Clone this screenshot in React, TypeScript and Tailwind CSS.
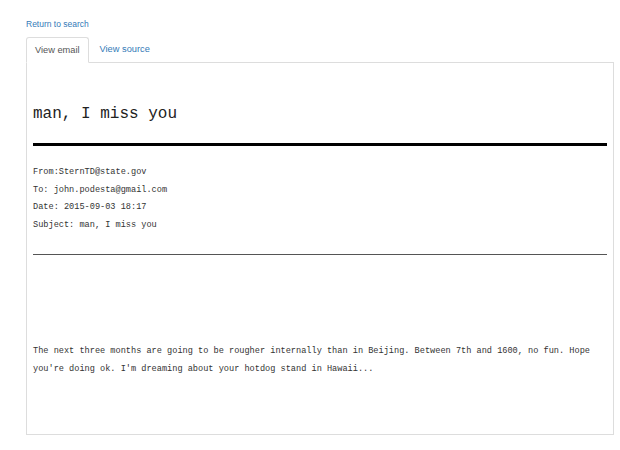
export default function App() {
  const mono = { fontFamily: '"Liberation Mono", "DejaVu Sans Mono", monospace' };
  return (
    <div className="min-h-[450px] bg-white px-[26px] pt-[18px]" style={{ fontFamily: '"Liberation Sans", Arial, sans-serif' }}>
      <a className="block text-[8.5px] leading-[12px] text-[#337ab7]">Return to search</a>

      <div className="mt-[7px] w-[588px]">
        {/* tabs */}
        <div className="flex border-b border-[#ddd]">
          <div className="-mb-px h-[26px] border border-[#ddd] border-b-white bg-white px-[8px] text-[9.25px] leading-[25px] text-[#555] rounded-t-[3px]">
            View email
          </div>
          <div className="h-[25px] px-[11px] text-[9.25px] leading-[25px] text-[#337ab7]">View source</div>
        </div>

        {/* panel */}
        <div className="border border-t-0 border-[#ddd] px-[6px] pt-[41px] pb-[56px] text-[#333]" style={mono}>
          <h1 className="text-[16px] leading-[20px] text-[#222]">man, I miss you</h1>
          <div className="mt-[19px] h-[3px] bg-black" />

          <div className="mt-[18px] text-[8.6px] leading-[17.5px]">
            <div>From:SternTD@state.gov</div>
            <div>To: john.podesta@gmail.com</div>
            <div>Date: 2015-09-03 18:17</div>
            <div>Subject: man, I miss you</div>
          </div>
          <div className="mt-[20px] h-px bg-[#555]" />

          <p className="mt-[88px] text-[8.6px] leading-[17.5px]">
            The next three months are going to be rougher internally than in Beijing. Between 7th and 1600, no fun. Hope
            you're doing ok. I'm dreaming about your hotdog stand in Hawaii...
          </p>
        </div>
      </div>
    </div>
  );
}
